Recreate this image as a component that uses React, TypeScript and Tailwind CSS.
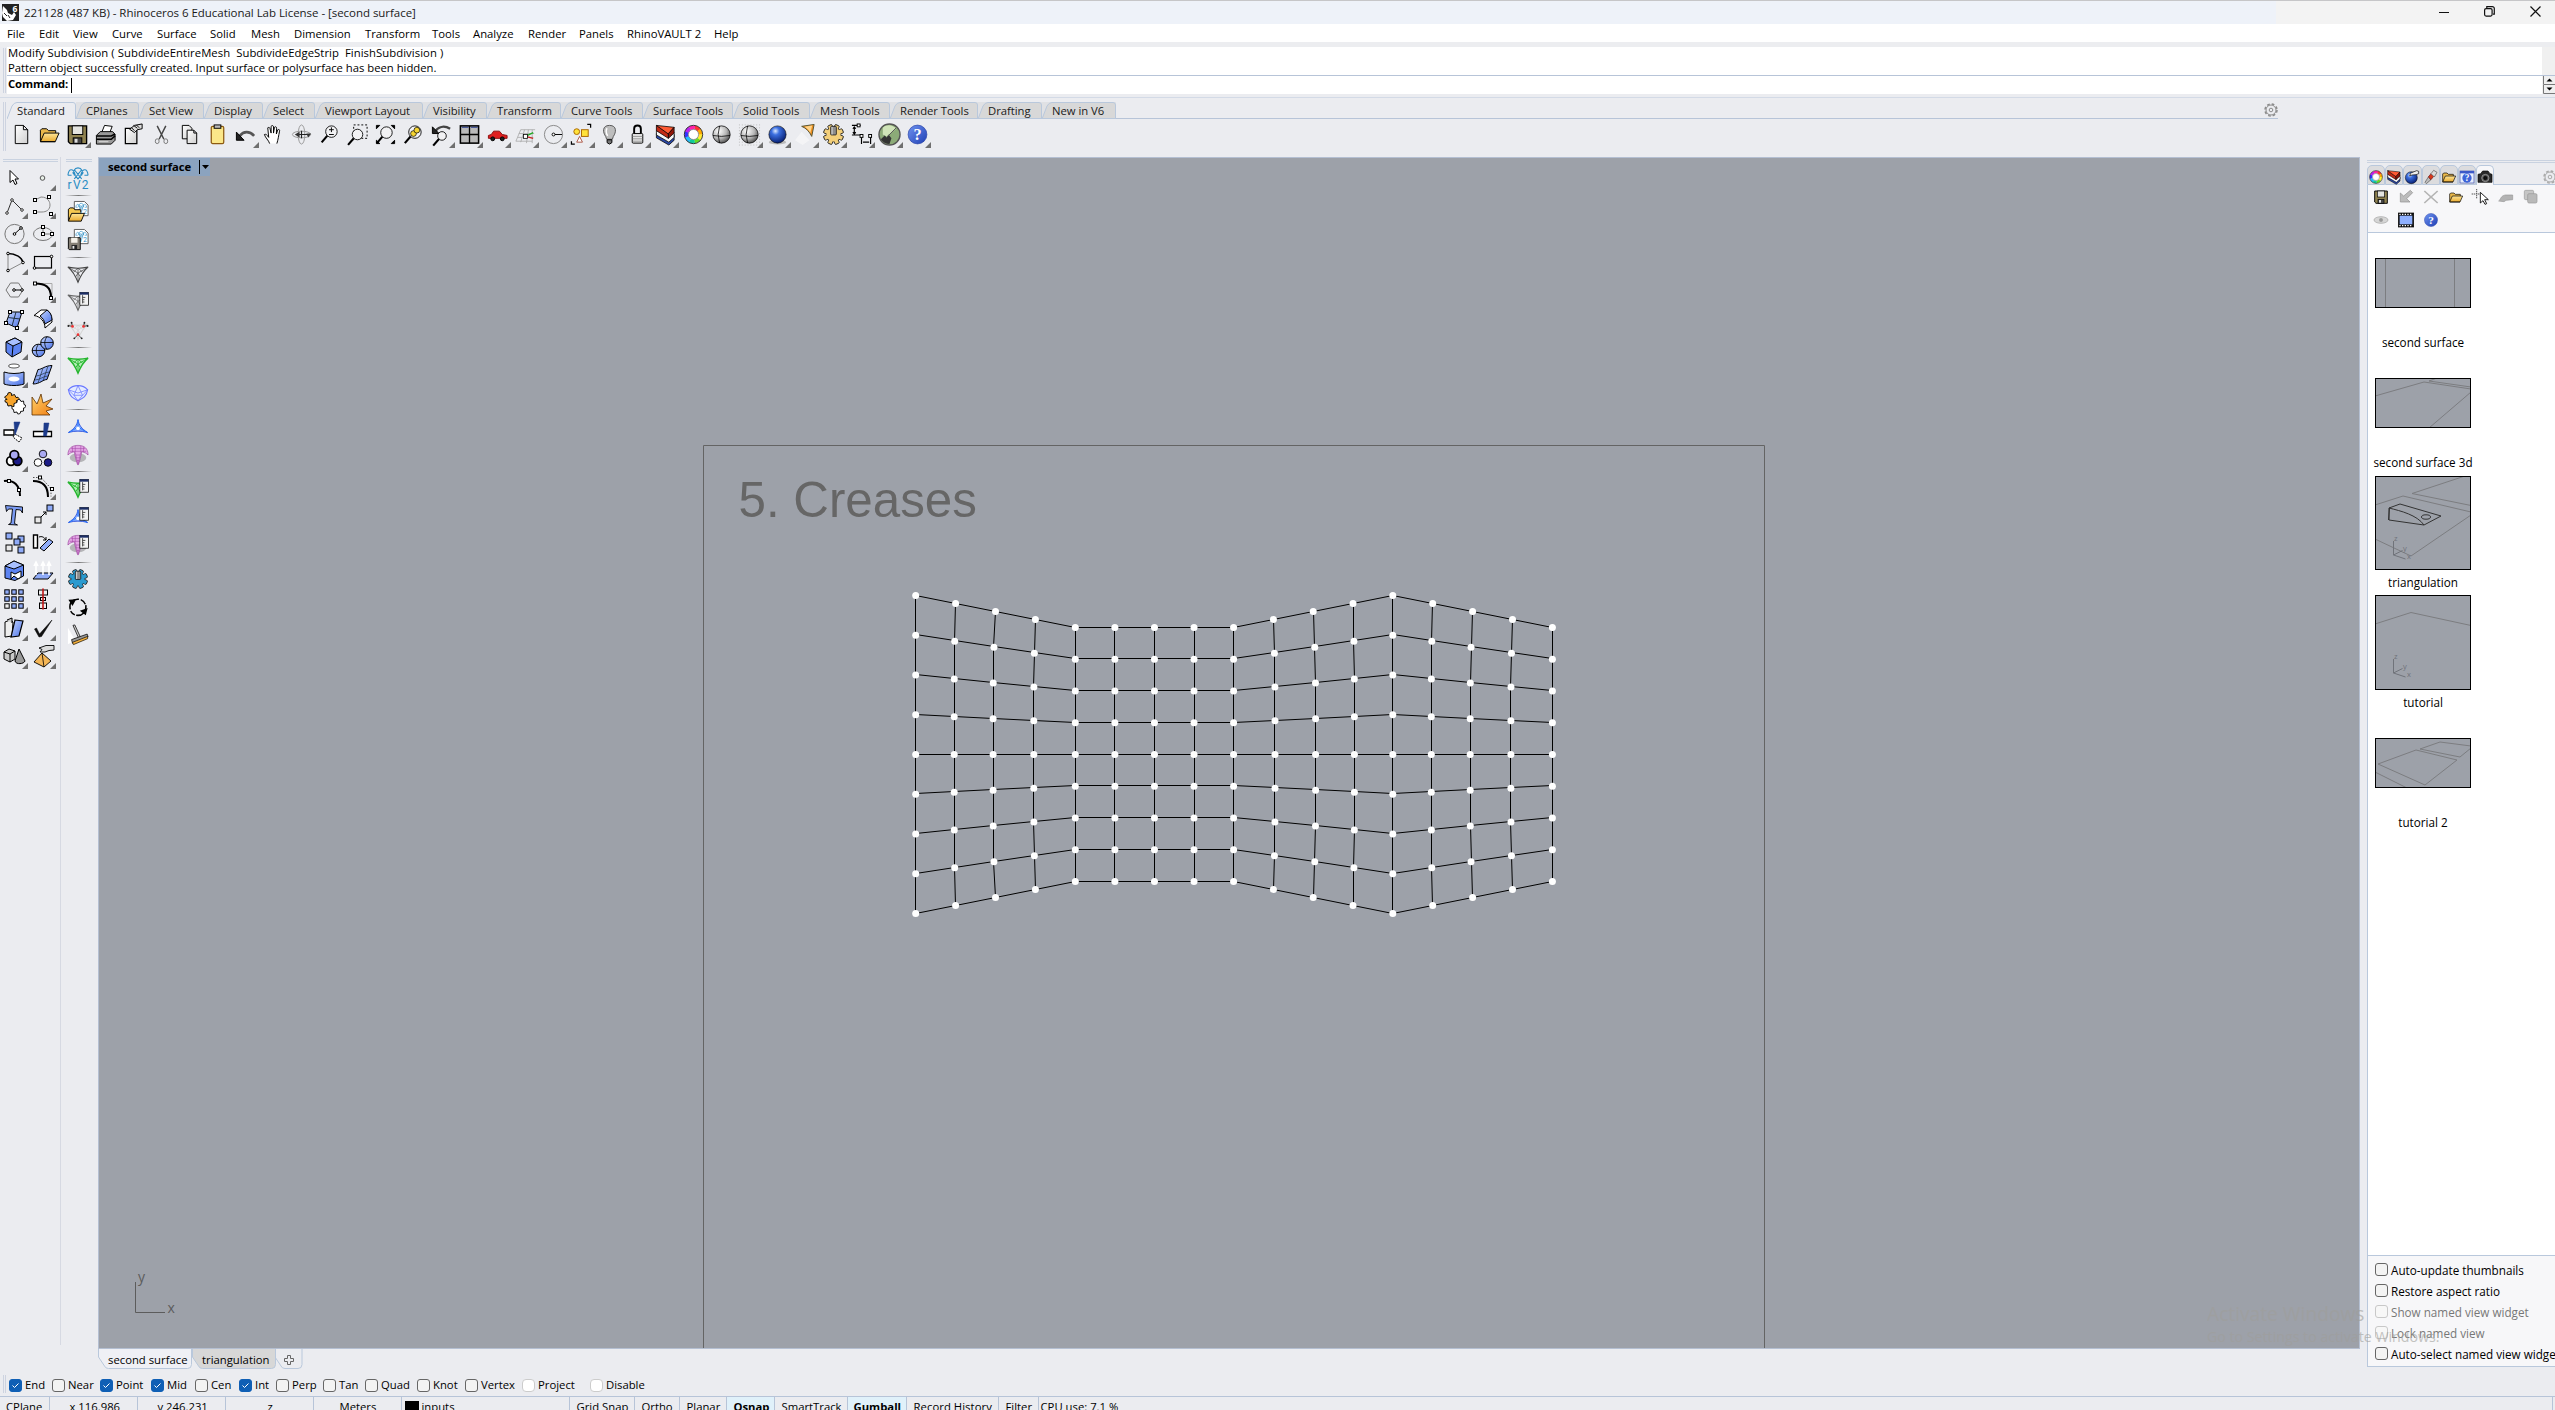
import React from "react";

type Node = React.ReactNode;

/* ---------- shared drawing helpers ---------- */

function Ic({ children, s = 24, cls = "" }: { children: Node; s?: number; cls?: string }) {
  return (
    <svg width={s} height={s} viewBox="0 0 24 24" fill="none" stroke="#000" strokeWidth="1" className={"shrink-0 block overflow-visible " + cls}>
      {children}
    </svg>
  );
}

function Defs() {
  return (
    <svg width="0" height="0" className="absolute">
      <defs>
        <radialGradient id="gGray" cx="0.35" cy="0.3" r="0.8"><stop offset="0" stopColor="#fff" /><stop offset="0.55" stopColor="#b5b5b5" /><stop offset="1" stopColor="#3b3b3b" /></radialGradient>
        <radialGradient id="gBlue" cx="0.38" cy="0.3" r="0.75"><stop offset="0" stopColor="#dbe9ff" /><stop offset="0.3" stopColor="#3b6fe0" /><stop offset="1" stopColor="#041a6b" /></radialGradient>
        <linearGradient id="gHelp" x1="0" y1="0" x2="1" y2="1"><stop offset="0" stopColor="#6f93f0" /><stop offset="1" stopColor="#1f3fb4" /></linearGradient>
        <linearGradient id="gSoft" x1="0" y1="0" x2="1" y2="1"><stop offset="0" stopColor="#c5d6ff" /><stop offset="1" stopColor="#4a72e8" /></linearGradient>
        <linearGradient id="gFold" x1="0" y1="0" x2="0" y2="1"><stop offset="0" stopColor="#ffe79a" /><stop offset="1" stopColor="#e9a92c" /></linearGradient>
        <linearGradient id="gOr" x1="0" y1="0" x2="1" y2="1"><stop offset="0" stopColor="#ffd36b" /><stop offset="1" stopColor="#f07c12" /></linearGradient>
        <linearGradient id="gPage" x1="0" y1="0" x2="1" y2="1"><stop offset="0" stopColor="#fff" /><stop offset="1" stopColor="#cfcfcf" /></linearGradient>
      </defs>
    </svg>
  );
}

const Sq = ({ x, y, f = "#fff", r = 1.5 }: { x: number; y: number; f?: string; r?: number }) => (
  <rect x={x - r} y={y - r} width={r * 2} height={r * 2} fill={f} />
);
const Pt = ({ x, y }: { x: number; y: number }) => <circle cx={x} cy={y} r="1.3" fill="#fff" />;

const Wheel = () => (
  <g fill="none" strokeWidth="4">
    {["#f33", "#fa0", "#fe3", "#6d2", "#1c9", "#2bf", "#33f", "#b2e", "#f2a"].map((c, i) => (
      <circle key={c} cx="12" cy="12" r="7.5" stroke={c} pathLength="9" strokeDasharray="1.05 7.95" strokeDashoffset={-i + 2} />
    ))}
    <circle cx="12" cy="12" r="9.6" stroke="#222" strokeWidth="0.9" />
    <circle cx="12" cy="12" r="5.3" stroke="#555" strokeWidth="0.6" fill="#fff" />
  </g>
);
const Layers = () => (
  <g strokeWidth="0.8">
    <path d="M2.5 11v4.5l13 7.5 5.5-5v-6z" fill="#2947a8" />
    <path d="M2.500 8v4.500l13 7.500 5.500-5v-5z" fill="#f5f5f5" />
    <path d="M2.500 2.500v5.500l12.500 8V11z" fill="#c32a14" />
    <path d="M2.500 2.500l18.500 2-6 7z" fill="#ff5a33" />
    <path d="M21 4.500v6l-6 5.500v-5z" fill="#8f1508" />
  </g>
);
const Folder = () => (
  <g strokeWidth="1">
    <path d="M2.500 19V7.500l1.500-1.500h5l2 2h7.500v3" fill="#e9b84b" />
    <path d="M2.500 19.500l4-9h15.500l-4 9z" fill="url(#gFold)" />
    <path d="M2.500 19.500h15.500" />
  </g>
);
const Floppy = () => (
  <g>
    <path d="M2.500 3h19v18.500H4.500l-2-2z" fill="#8f8250" strokeWidth="1.400" />
    <rect x="6.500" y="3" width="11" height="9" fill="#e4e4e0" />
    <rect x="7.500" y="15.500" width="9" height="6" fill="#444" />
    <rect x="9" y="16.500" width="3" height="4" fill="#ddd" stroke="none" />
  </g>
);
const teeth = [0, 45, 90, 135, 180, 225, 270, 315];
const Gear = ({ c, o = "#222" }: { c: string; o?: string }) => (
  <g>
    {teeth.map((a) => <rect key={a} x="9.700" y="1.500" width="4.600" height="6" rx="0.800" fill={c} stroke={o} strokeWidth="0.900" transform={`rotate(${a + 22.5} 12 12)`} />)}
    <circle cx="12" cy="12" r="7.600" fill={c} stroke={o} strokeWidth="0.500" />
    {teeth.map((a) => <rect key={a} x="10.200" y="3" width="3.600" height="4" fill={c} stroke="none" transform={`rotate(${a + 22.5} 12 12)`} />)}
    <rect x="9" y="3.500" width="6" height="9" rx="1" fill="#8d8d8d" strokeWidth="0.700" />
    <path d="M10.500 4v8" stroke="#ddd" />
  </g>
);
const Help = () => (
  <g>
    <circle cx="12" cy="12" r="9.800" fill="url(#gHelp)" stroke="#2a44a8" strokeWidth="0.700" />
    <text x="12" y="18" textAnchor="middle" fontSize="17" fontWeight="700" fill="#fff" stroke="none" fontFamily="Liberation Serif, serif">?</text>
  </g>
);
const Lens = ({ x = 14, y = 9, r = 6 }) => (
  <g>
    <path d={`M${x - r * 0.7} ${y + r * 0.7}L${x - r * 0.7 - 6} ${y + r * 0.7 + 7}`} strokeWidth="2.200" />
    <circle cx={x} cy={y} r={r} fill="#f2f2f4" strokeWidth="0.900" />
  </g>
);
const Hand = () => <path d="M9 6.500L19 2.500l3 1v3.500l-4 1.500-6 .5-3.500 1.500 1-2.500z" fill="#eee" strokeWidth="1" />;
const Globe = ({ x = 12, y = 12, r = 9, g = "url(#gGray)" }) => (
  <g strokeWidth="0.800">
    <circle cx={x} cy={y} r={r} fill={g} />
    <path d={`M${x - 2} ${y - r}q-3 ${r} 0 ${r * 2}`} />
    <path d={`M${x - r} ${y + 1}q${r} 2 ${r * 2} 0`} />
  </g>
);

/* ---------- main toolbar ---------- */

const toolbar: [Node, boolean][] = [
  [<path d="M5.500 2.500h8.500l4.500 4.500v14.500h-13zM14 2.500V7h4.500" fill="url(#gPage)" />, false],
  [<Folder />, false],
  [<Floppy />, true],
  [<g><path d="M8 10l3-7.500 8 1-3 7.500" fill="#fff" /><path d="M2.500 13l4-4h13l2.500 3v6l-4 4H2.500z" fill="#999" /><path d="M2.500 13.500h15.500l4-2M2.500 17h15.500l4-3.500" strokeWidth="1.600" /><path d="M5 19.500h10" stroke="#ddd" /></g>, false],
  [<g><path d="M3.500 5.500h12v16h-12z" fill="url(#gPage)" strokeWidth="1.300" /><path d="M8 6.500l5-4 8-1.500v5l-5 1-3 3z" fill="#ddd" /><path d="M12 2.500l4 3M15 2l3 3M10 5l3 3" /></g>, false],
  [<g><path d="M7.500 3l7 14M16.500 3l-7 14" stroke="#444" strokeWidth="1.500" /><ellipse cx="7.500" cy="19" rx="2" ry="2.500" stroke="#777" /><ellipse cx="16.500" cy="19" rx="2" ry="2.500" stroke="#777" /></g>, false],
  [<g fill="url(#gPage)"><path d="M4.500 2.500h7l3 3v11h-10z" /><path d="M9.500 7.500h7l3 3v11h-10zM16.500 7.500v3h3" /></g>, false],
  [<g><rect x="5.500" y="3.500" width="13" height="18" rx="1.500" fill="#fbe789" stroke="#8d5a10" strokeWidth="1.300" /><rect x="8.500" y="2" width="7" height="3.500" fill="#bbb" /></g>, false],
  [<g><path d="M6 13.500c4-5 10-5.500 15 0" strokeWidth="2.800" stroke="#555" /><path d="M2.500 9.500v8.500h8z" fill="#222" /></g>, true],
  [<path d="M8 21.500c-1-3.500-4.500-6-5.500-9.500 1.500-.8 3 .6 4.500 3L6 5c1.500-1 2.300 0 2.500 1.500l1 4V3.500c1-1.300 2.300-1 2.500.5v6.500l1-6c1-1 2.300-.6 2.200 1l-.2 6 1.500-4.500c1.400-.6 2.200.3 1.800 1.500-1 5-1.500 9-2.800 13" fill="#fff" />, false],
  [<g stroke="#999"><ellipse cx="12" cy="12" rx="9.500" ry="3.500" /><ellipse cx="12" cy="12" rx="3.500" ry="10" /><path d="M9 12h12M12 8v8" stroke="#222" strokeWidth="1.200" /><path d="M5 12l5-3v6zM19 15l3-4-5 0z" fill="#333" stroke="none" /></g>, false],
  [<g><Lens /><path d="M14 4.500v5M11.500 7h5M11.500 12h5" strokeWidth="1" /></g>, false],
  [<g><rect x="8" y="2" width="14" height="14" strokeDasharray="2 2" /><Lens x={12} y={12} r={5.5} /></g>, false],
  [<g><Lens x={13} y={10} r={6} /><path d="M2.500 6V2.500H6L2.500 6zM18 2.500h3.500V6L18 2.500zM2.500 18v3.500H6L2.500 18zM18 21.500h3.500V18L18 21.500z" fill="#000" /></g>, false],
  [<g><Lens x={13.5} y={9.5} r={6.5} /><circle cx="12" cy="11" r="3" fill="#f6d532" strokeWidth="0.700" /><circle cx="15.500" cy="7.500" r="3" fill="#f6d532" strokeWidth="0.700" /></g>, false],
  [<g><path d="M6 8c4-5 10-5 15-2" stroke="#444" strokeWidth="2.500" /><path d="M2.500 4v7h7z" fill="#222" /><Lens x={12.5} y={13.5} r={4.5} /></g>, true],
  [<g><rect x="2.500" y="3" width="19" height="18" fill="#b9b9b9" strokeWidth="1.600" /><path d="M12 3v18M2.500 12h19" strokeWidth="1.400" /><path d="M4 4.500h7M13.500 4.500h7" stroke="#2b3f8f" /></g>, true],
  [<g><path d="M2.500 13l3-1 2.500-3.500h6l3 3.500 5 1v3H2.500z" fill="#e02020" stroke="#8a0e0e" /><circle cx="7" cy="16.500" r="2" fill="#222" /><circle cx="17" cy="16.500" r="2" fill="#222" /></g>, true],
  [<g stroke="#a5a5a5" strokeWidth="0.800"><path d="M7 7L2 19M11 7L7 20M15 7l-2 14M19 7v14M7 7h15M5 11h16M4 15h16M2 19h17" /><path d="M12 14l8-4" stroke="#2a2" strokeWidth="1.500" /><path d="M12 14l8 2" stroke="#c22" strokeWidth="1.500" /><rect x="10" y="12" width="4" height="4" fill="#fff" stroke="#000" /></g>, true],
  [<g><circle cx="12" cy="12" r="9.500" stroke="#888" /><path d="M12 12h9" /><circle cx="12" cy="12" r="1.500" fill="#fff" /></g>, true],
  [<g><path d="M18 1.500h3.500V5M1.500 19v3H5" strokeWidth="1.300" /><circle cx="7" cy="9" r="3" fill="#ffe23a" stroke="#a60" /><rect x="12" y="7" width="7" height="7" fill="#ffe23a" stroke="#a60" /><path d="M10 14l3 6H7z" fill="#fff" stroke="#a54" /></g>, true],
  [<g><path d="M12 2.500c8 0 7 7.500 4 11.500l-1 3h-6l-1-3C5 10 4 2.500 12 2.500z" fill="#bdbdbd" stroke="#555" /><path d="M9.500 5.500c-1.500 2-1 5 .5 8" stroke="#fff" strokeWidth="1.500" /><path d="M9.500 17.500h5v3l-2.500 1.500-2.500-1.500z" fill="#777" /></g>, true],
  [<g><path d="M8.500 11V6c0-4.500 7-4.500 7 0v5" strokeWidth="2" /><rect x="6.500" y="11" width="11" height="10" rx="1" fill="#e5e5e5" /><path d="M7 14h10M7 16.500h10M7 19h10" stroke="#999" /></g>, true],
  [<Layers />, true],
  [<Wheel />, true],
  [<Globe />, false],
  [<g><path d="M1 2h22M1 5h22M1 8h22M1 11h22M1 14h22M1 17h22M1 20h22M1 23h22" stroke="#bbb" strokeDasharray="1 2" /><Globe /></g>, true],
  [<g><ellipse cx="12" cy="20" rx="9" ry="2.500" fill="#bbb" stroke="none" /><circle cx="12" cy="12" r="9" fill="url(#gBlue)" strokeWidth="0.600" /></g>, true],
  [<g><path d="M1 18L8 9l8 9-7 5z" fill="#fafafa" stroke="none" opacity="0.600" /><path d="M8 3.500l13-2-2.500 12.500C16 9 13 5.500 8 3.500z" fill="#ee8d1f" stroke="#553" /><path d="M11 4l8-1.500-2 8c-1.500-3-3.500-5-6-6.500z" fill="#ffd58a" stroke="none" /></g>, true],
  [<Gear c="#f3cf7a" />, true],
  [<g><path d="M2 2.500h9M2 12.500h9M4.500 4v7M3 6l1.500-2L6 6M3 9.500l1.500 2 1.500-2M12 14v8M21.500 14v8M13.500 20h6.500" strokeWidth="1.200" /><Sq x={9} y={2.5} /><Sq x={12} y={13.5} /><Sq x={21} y={13.5} /></g>, true],
  [<g><circle cx="12" cy="12" r="11" fill="#8cab78" stroke="#555" strokeWidth="1.400" /><path d="M5 5c4-4 11-3 14 1L9 14l-4-2z" fill="#cfe3b8" stroke="none" /><path d="M3 17l4-4 2 2 2-3 3 4-2 6c-4 0-7-2-9-5z" fill="#333" stroke="none" /><path d="M9 15L19 5" stroke="#555" /></g>, true],
  [<Help />, true],
];

/* ---------- side palette, two columns ---------- */

const blue = "#8fabf8";
const palette: [Node, boolean][] = [
  [<path d="M8 4.500v12l3-2.500 2 4.500 2-1-2-4.500h3.500z" fill="#fff" />, false],
  [<circle cx="11.500" cy="12" r="2.300" fill="#e8f0e8" stroke="#555" />, true],
  [<g stroke="#333"><path d="M5 19L10 6l10 10" /><Pt x={5} y={19} /><Pt x={10} y={6} /><Pt x={20} y={16} /></g>, true],
  [<g><path d="M4 6l6-3c7 0 9 5 9 8 0 5-4 7-8 7H5" stroke="#888" /><Sq x={4} y={6} /><Sq x={18} y={3} /><Sq x={4} y={18} /><Sq x={20} y={20} /></g>, true],
  [<g><circle cx="12.500" cy="12" r="9.600" stroke="#777" /><path d="M12.500 12l6.500-6" /><Pt x={12.5} y={12} /><Pt x={19} y={6} /></g>, true],
  [<g><ellipse cx="12" cy="12" rx="9.500" ry="6.500" stroke="#777" /><path d="M12 12V5M12 12h9" stroke="#777" /><Sq x={12} y={5} /><Sq x={12} y={12} /><Sq x={21} y={12} /></g>, true],
  [<g><path d="M6 3.500v17l15-8" stroke="#888" /><path d="M6 3.500c8 0 14 4 15 9" strokeWidth="1.300" /><Pt x={6} y={3.5} /><Pt x={6} y={20.5} /><Pt x={21} y={12.5} /></g>, true],
  [<g><rect x="3.500" y="6.500" width="17" height="11.500" strokeWidth="1.200" /><Pt x={3.5} y={18} /><Pt x={20.5} y={6.5} /></g>, true],
  [<g><path d="M4 12l4.500-7h8l4.500 7-4.500 7h-8z" stroke="#777" /><path d="M12 12h8" /><Pt x={12} y={12} /><Pt x={20} y={12} /></g>, true],
  [<g><path d="M4 5.500h17v15" stroke="#aaa" /><path d="M4 5.500c10 0 16 3 16 14" strokeWidth="2" /><Sq x={4} y={5.5} /><Sq x={20} y={20} /></g>, true],
  [<g><path d="M8 5h12l-5 16L4 16z" fill="url(#gSoft)" /><path d="M14 5l-4 14M6 10.500l12 1.500" stroke="#234" /><Sq x={8} y={5} /><Sq x={20} y={5} /><Sq x={4} y={16} /><Sq x={15} y={21} /></g>, true],
  [<g><path d="M3 8.500L10 3h6c4 3 5 8 5 12l-7 6c0-6-4-11.500-11-12.500z" fill="#fff" /><path d="M9 9l7-6c3 2 5 5 5 10l-7 4c-.5-3-2-6-5-8z" fill="url(#gSoft)" /></g>, true],
  [<g><path d="M4 7l9-4 7 4-1 10-9 5-6-5z" fill="#5d84f2" /><path d="M4 7l9-4 7 4-9 4z" fill="#a9c0ff" /><path d="M11 11l-1 11" /></g>, true],
  [<g><circle cx="7.500" cy="15.500" r="6.300" fill="url(#gSoft)" /><circle cx="16" cy="8" r="6.300" fill="url(#gSoft)" /><path d="M1 15.500h13M7.500 9.500c-3 3-3 9 0 12M10 7.500h12M16 2c-3 3-3 9 0 12" strokeWidth="0.800" /></g>, true],
  [<g><ellipse cx="12" cy="3" rx="5.500" ry="2" fill="#fff" stroke="#555" /><path d="M2 9c6 2 14 2 20 0v12c-6 2-14 2-20 0z" fill="url(#gSoft)" /><ellipse cx="12" cy="16" rx="5.500" ry="2.500" fill="#fff" stroke="none" /></g>, true],
  [<g><path d="M7 6.500c4 0 7-4 14-4l-5 14c-4 0-7 4.500-14 4.500z" fill="url(#gSoft)" /><path d="M12 5L7 20M17 3l-5 15M5 13c5 0 8-4 14-4M4 17c5 0 8-4 13-4" stroke="#234" strokeWidth="0.700" /></g>, true],
  [<g strokeWidth="0.900"><path d="M2.500 6l3-2q0-3 2.500-2.500t1.500 3l3-1 1.500 3q2.500-1 3 1t-2.500 2l1 3-3 1q1 2.500-1 3t-2-2l-3.500.5-1-3.500q-2.500 0-2-2t2-1z" fill="#f6a42c" /><path d="M12 12.500l3-1q-.5-2.500 1.500-3t2.500 2l2.500-.5.500 3.500q2 0 1.500 2t-2 1.500l0 3-3 .5q.5 2-1.500 2.500t-2-2l-3 .5-.5-3q-2 0-1.500-2t2-1z" fill="#fff" /></g>, false],
  [<path d="M1 24V6l5 7L10 3l2 9 9-4-6 7 7 3-7 2 4 4z" fill="url(#gOr)" stroke="#5d3000" strokeWidth="0.800" />, false],
  [<g><path d="M2 11h10v5H2z" fill="#fff" strokeWidth="1.300" /><path d="M13 15l7 4-3 4-6-5z" fill="#fff" strokeDasharray="2 1" /><path d="M12 3h6l-5 13z" fill="#1d3b8b" stroke="#1d3b8b" strokeWidth="0.500" /></g>, false],
  [<g><path d="M2.500 12.500h18v5h-18z" fill="#fff" strokeWidth="1.300" /><path d="M13 4h5l-2.500 13h-3z" fill="#1d3b8b" stroke="#1d3b8b" strokeWidth="0.500" /></g>, false],
  [<g strokeWidth="1.800"><circle cx="9" cy="14" r="4.300" fill="#fff" /><circle cx="15.500" cy="14" r="4.300" fill="#1c1c86" /><circle cx="12.300" cy="8" r="4.300" fill="#a9a9f2" /></g>, true],
  [<g strokeWidth="0.900"><circle cx="12" cy="7" r="3.800" fill="#a9a9f2" /><circle cx="7" cy="15.500" r="3.800" fill="#fff" /><circle cx="17" cy="15.500" r="3.800" fill="#1c1c86" /></g>, false],
  [<g><path d="M2 6c10-2 16 5 16 15" strokeWidth="2" /><Sq x={7} y={6} /><Sq x={17} y={15} /></g>, false],
  [<g><path d="M2 2.500h8l10 11v8" stroke="#555" strokeDasharray="1.500 1.500" /><path d="M2 6c10 0 15 5 15 16" strokeWidth="2" /><Sq x={9} y={2.5} /><Sq x={21} y={14} /></g>, true],
  [<path d="M3.500 2.500l17 1.500v6l-2-3-4.500-.5-1.500 14 3 1.500-9-.5 2.500-1.500 1.500-14-4 0-2 2.500z" fill="#7a9af2" strokeWidth="0.900" />, false],
  [<g><Sq x={19} y={5} f={blue} r={3} /><Sq x={7} y={17} f="#e8e8e8" r={3} /><path d="M10 14l5-5M15 12V9h-3" /></g>, true],
  [<g><Sq x={7} y={5} f={blue} r={3} /><Sq x={19} y={8} f={blue} r={3} /><Sq x={15} y={11} f={blue} r={3} /><Sq x={7} y={17} f="#e8e8e8" r={3} /><Sq x={19} y={19} f={blue} r={3} /></g>, false],
  [<g><path d="M2.500 4h4v13h-4z" fill="#fff" strokeWidth="1.400" /><path d="M9 17l9-9 4 3-9 9z" fill={blue} /><path d="M8 6c3-1 5 0 7 3M15 6v3h-3" /></g>, false],
  [<g><path d="M3 7l9-5 9.500 4v11L13 21.500 3 19z" fill="#5d84f2" /><path d="M3 7l9-5 9.500 4L12 10z" fill="#a9c0ff" /><path d="M9 13l4 2 6-3v6l-3 2-4-3-3 3z" fill="#fff" /></g>, true],
  [<g><path d="M2 20l5-6h15l-5 6z" fill={blue} /><path d="M5 16V5M12 16V5M18 16V5M3 7l2-4 2 4M10 7l2-4 2 4M16 7l2-4 2 4" stroke="#fff" strokeWidth="1.600" /></g>, true],
  [<g>{[5, 12, 19].map((y) => [5, 12, 19].map((x) => <Sq key={x + "-" + y} x={x} y={y} f={x === 5 && y === 19 ? "#eee" : blue} r={2.2} />))}</g>, true],
  [<g><rect x="7.500" y="3" width="9" height="5" fill="#eee" /><rect x="9.500" y="10.500" width="5" height="3" fill="#eee" /><rect x="8.500" y="16" width="7" height="5.500" fill="#eee" /><path d="M12 1.500v21" stroke="#c01616" strokeWidth="1.600" /></g>, true],
  [<g><path d="M3 6l5-2 3 2-1 14-7 1z" fill="#eee" /><path d="M5 4l5-2v5" fill="#ccc" /><path d="M13 4l8 1-4 15-8 1z" fill="url(#gSoft)" strokeWidth="1.200" /></g>, true],
  [<path d="M3.500 13l2-1 3 6L21 4 10.500 20.500l-2.500.5z" fill="#111" strokeWidth="0.500" />, true],
  [<g><path d="M2 8l5-3 6 2v8l-5 3-6-3z" fill="#c9c9c9" /><path d="M2 8l6 2v8M8 10l5-3" /><path d="M17 5l6 12c-1 3-9 4-10 0z" fill="#999" /></g>, true],
  [<g><path d="M11 9l9 8-7 6-10-5z" fill="#f4b656" strokeWidth="0.900" /><path d="M11 9l2 14" strokeWidth="0.800" /><path d="M8 4l7-2.500h8V6l-5 .5-4 1.500H9l2-2.500z" fill="#ddd" strokeWidth="0.900" /></g>, true],
];

/* ---------- form finding plug-in column ---------- */

const Rv = ({ x = 0, y = 0, k = 1 }) => (
  <g transform={`translate(${x} ${y}) scale(${k})`} stroke="#2a8cc4">
    <path d="M1 9c1-8 6-8 8 0M8 9c-2-4 0-8 4-8s6 4 4 8M15 9c2-8 7-8 8 0M8 3l8 10M16 3L8 13M1 9h4M19 9h4M6 6l6 7 6-7" strokeWidth="1.200" />
    <text x="0.500" y="23.500" fontSize="13" fill="#2a8cc4" stroke="none" fontFamily="Roboto, sans-serif" textLength="23">rV2</text>
  </g>
);
const Tri = ({ c = "#444", w = 0.8 }) => (
  <g stroke={c} strokeWidth={w}>
    <path d="M1 4.500c7 1.500 15 1.500 22 0-5 4-8 9-11 16.500C9 13.500 6 8.500 1 4.500z" strokeWidth={w * 1.5} />
    <path d="M1 4.500L12 11l11-6.500M12 11v9M7 10l5-4.500 5 4.500M12 5.500V11M9.500 15l2.500-4 2.500 4" />
  </g>
);
const Star = () => (
  <g stroke="#3355dd"><path d="M12 4c1 6 4 10 10.500 14-7-2-14-2-21 0C8 14 11 10 12 4z" fill="#7fa8ff" /><path d="M12 4v8l10 6M12 12L2 18" stroke="#2277ff" /><circle cx="12" cy="13.500" r="2" fill="#fff" stroke="none" /></g>
);
const Vault = () => (
  <g stroke="#a548a8" strokeWidth="0.600">
    <ellipse cx="12" cy="15" rx="9" ry="5" fill="#b5b5b8" stroke="none" />
    <path d="M1 12C1 4 6 1.500 12 1.500S23 4 23 12c-2-2-4-3-7-3.500C15 14 14 18 12.500 22.500h-1C10 18 9 14 8 8.500 5 9 3 10 1 12z" fill="#e3a6e4" stroke="#8d2f90" />
    <path d="M9 2v7l3 13 3-13V2M4 5h16M3 8h18M9.500 12h5M10 15h4M11 18h2M6 3v6M18 3v6" />
  </g>
);
const Panel = () => (
  <g><rect x="14" y="1.500" width="9.500" height="14" fill="#f3f3f3" strokeWidth="0.800" /><rect x="14" y="1.500" width="9.500" height="2.500" fill="#1b2d66" stroke="none" /><path d="M17 4.500v9M17 7h3M17 9.500h2M17 12h2" stroke="#444" /></g>
);
const PageRv = () => (
  <g><path d="M8 .5h11l4 4v11.500H8z" fill="#fff" stroke="#555" /><Rv x={9} y={2} k={0.54} /></g>
);
const GreenTri = () => (
  <g><path d="M2 5c7 1 13 1 20 0l-10 15z" fill="#b5efb8" stroke="none" /><Tri c="#25b52e" w={1} /></g>
);

const plugin: (Node | null)[] = [
  <Rv />,
  null,
  <g><PageRv /><path d="M1.500 21.500V9l2-1.500h3.500l1.500 2h6.500v3" fill="#f5c851" /><path d="M1.500 22l3.500-8.500h14l-3.500 8.500z" fill="url(#gFold)" /></g>,
  <g><PageRv /><path d="M1.500 9.500h13v13h-12l-1-1z" fill="#857f75" /><rect x="4.500" y="9.500" width="7" height="5.500" fill="#f4f0e8" stroke="none" /><rect x="5" y="17.500" width="6" height="5" fill="#222" stroke="none" /><rect x="6" y="18.500" width="2" height="3" fill="#eee" stroke="none" /></g>,
  null,
  <Tri />,
  <g><Tri c="#666" /><Panel /></g>,
  <g><Tri c="#d5d5d5" /><path d="M6 7L1 6M6 7L5 3M18 7l5-1M18 7l1-4M12 16l-4 4M12 16l4 4" strokeWidth="1" stroke="#444" /><g fill="#e33" stroke="none"><circle cx="6" cy="7" r="1.500" /><circle cx="18" cy="7" r="1.500" /><circle cx="12" cy="16" r="1.500" /></g><g fill="#222" stroke="none"><circle cx="1.500" cy="6.500" r="1" /><circle cx="22.500" cy="6.500" r="1" /><circle cx="8" cy="20" r="1" /><circle cx="16" cy="20" r="1" /><circle cx="5" cy="3" r="1" /><circle cx="19" cy="3" r="1" /></g></g>,
  null,
  <GreenTri />,
  <g stroke="#6a78ff" strokeWidth="0.800"><path d="M1.500 8.500c5-6 16-6 21 0-1 7-5 9-10.500 12C6.500 17.500 2.500 15.500 1.500 8.500z" fill="#e3eaff" strokeWidth="1.200" /><path d="M1.500 8.500l6 6L12 4l5 10.500 5.500-6M7.500 14.500h9.500L12 20.500zM1.500 8.500L12 12l10.500-3.500" /></g>,
  null,
  <Star />,
  <Vault />,
  null,
  <g><GreenTri /><Panel /></g>,
  <g><Star /><Panel /></g>,
  <g><Vault /><Panel /></g>,
  null,
  <Gear c="#2b9bd0" />,
  <g><path d="M3.500 14.500C2 7 6 3 13 3.500M10 21c7 1 11.500-4 10.500-11" strokeWidth="1.700" /><path d="M1.500 4l8.500-.5-4 7.500zM22.500 13l-2 8-6.500-5z" fill="#000" stroke="none" /><path d="M15 4c2.500 1 4 2.500 5 5M8.500 20.500c-2-.8-3.500-2-4.500-4" strokeWidth="1.500" /></g>,
  <g><path d="M1 4l8 14-8 4z" fill="#fff" stroke="none" /><path d="M6.500 1.500l2-.5 6 13-2 1z" fill="#ccc" strokeWidth="0.800" /><path d="M5 17l17-6 1 3-17 7z" fill="#999" strokeWidth="0.800" /><path d="M6 20l16.500-6.500v2.500L7 22.500z" fill="#f6b23c" strokeWidth="0.700" /></g>,
];

const Corner = ({ cls }: { cls: string }) => (
  <svg width="6" height="6" viewBox="0 0 6 6" className={"absolute " + cls}>
    <path d="M6 0v6H0z" fill="#6f6f6f" />
  </svg>
);

/* ---------- data ---------- */

const menus: [string, string][] = [
  ["File", "w-[32px]"], ["Edit", "w-[34px]"], ["View", "w-[39px]"], ["Curve", "w-[45px]"], ["Surface", "w-[53px]"],
  ["Solid", "w-[41px]"], ["Mesh", "w-[43px]"], ["Dimension", "w-[71px]"], ["Transform", "w-[67px]"], ["Tools", "w-[41px]"],
  ["Analyze", "w-[55px]"], ["Render", "w-[51px]"], ["Panels", "w-[48px]"], ["RhinoVAULT 2", "w-[87px]"], ["Help", "w-[40px]"],
];

const tabs: [string, number][] = [
  ["Standard", 69], ["CPlanes", 63], ["Set View", 65], ["Display", 59], ["Select", 52], ["Viewport Layout", 108],
  ["Visibility", 64], ["Transform", 74], ["Curve Tools", 82], ["Surface Tools", 90], ["Solid Tools", 77],
  ["Mesh Tools", 80], ["Render Tools", 88], ["Drafting", 64], ["New in V6", 74],
];

const osnaps: [string, number, number][] = [
  ["End", 43, 1], ["Near", 48, 0], ["Point", 51, 1], ["Mid", 44, 1], ["Cen", 44, 0], ["Int", 37, 1], ["Perp", 47, 0],
  ["Tan", 42, 0], ["Quad", 52, 0], ["Knot", 48, 0], ["Vertex", 57, 0], ["Project", 68, 2], ["Disable", 60, 2],
];

const status: [string, string][] = [
  ["CPlane", "w-[49.500px] pl-[6px]"], ["x 116.986", "w-[88px] pl-[20px]"], ["y 246.231", "w-[88px] pl-[20px]"],
  ["z", "w-[88px] pl-[42px]"], ["Meters", "w-[88px] pl-[26px]"], ["inputs", "w-[168px] pl-[3px]"],
  ["Grid Snap", "w-[65px] pl-[7px]"], ["Ortho", "w-[45px] pl-[7px]"], ["Planar", "w-[47px] pl-[7px]"],
  ["Osnap", "w-[48px] pl-[7px] font-bold bg-[#e0f1fa]"], ["SmartTrack", "w-[73px] pl-[7px]"],
  ["Gumball", "w-[59px] pl-[6px] font-bold bg-[#e0f1fa]"], ["Record History", "w-[92px] pl-[7px] tracking-[0.050px]"], ["Filter", "w-[40px] pl-[7px]"],
];

/* ---------- mesh geometry ---------- */

const crease = [[915.7, 159], [1075.3, 127], [1233.6, 127], [1392.8, 159], [1552.4, 127]];
const bow = [0, 1.4, 2.4, 1.6];
const damp = [0, 0.65, 0.95, 1, 1, 1, 0.95, 0.65, 0];
const grid: [number, number][][] = Array.from({ length: 17 }, (_, i) => {
  const s = Math.min(3, Math.floor(i / 4));
  const k = i - s * 4;
  const [x0, h0] = crease[s];
  const [x1, h1] = crease[s + 1];
  const dx = s === 1 || k === 4 ? 0 : s === 2 ? bow[(4 - k) % 4] : -bow[k];
  const h = h0 + ((h1 - h0) * k) / 4;
  return damp.map((d, j) => [x0 + ((x1 - x0) * k) / 4 + (s === 2 ? dx : dx) * d, 754.2 + (h * (j - 4)) / 4] as [number, number]);
});
const snap = (n: number) => Math.floor(n) + 0.5;

function Mesh() {
  return (
    <svg width="2260" height="1190" viewBox="99 158 2260 1190" className="absolute inset-0">
      <path d="M703.500 1348V445.500H1764.500V1348" fill="none" stroke="#646464" />
      <text x="738.500" y="516.500" fontSize="49.300" fill="#666" fontFamily="Liberation Sans, Arial, sans-serif">5. Creases</text>
      <g fill="none" stroke="#000">
        {grid.map((c, i) => <polyline key={i} points={c.map(([x, y]) => `${snap(x)},${y.toFixed(1)}`).join(" ")} />)}
        {damp.map((_, j) => <polyline key={j} points={grid.map((c) => `${c[j][0].toFixed(1)},${snap(c[j][1])}`).join(" ")} />)}
      </g>
      <g fill="#fff">
        {grid.map((c) => c.map(([x, y]) => <circle key={x + "/" + y} cx={x} cy={y + 0.2} r="3.500" />))}
      </g>
      <path d="M135.500 1282v30.500H165" fill="none" stroke="#5c5c5c" />
      <g fontSize="14" fill="#5c5c5c" fontFamily="Open Sans, sans-serif">
        <text x="138" y="1282">y</text>
        <text x="167.500" y="1313">x</text>
      </g>
    </svg>
  );
}

/* ---------- panel ---------- */

const line = "#7c7d80";
const axes = (
  <g stroke="#70737a">
    <path d="M18.500 79V65M18.500 79l9-4.500M18.500 79l12 4" />
    <g fontSize="7.500" fill="#70737a" stroke="none" fontFamily="Open Sans, sans-serif"><text x="19" y="65">z</text><text x="28" y="75">y</text><text x="32" y="83">x</text></g>
  </g>
);
const thumbs: [string, number, Node][] = [
  ["second surface", 50, <path d="M10.500 0v50M79.500 0v50" />],
  ["second surface 3d", 50, <path d="M0 18L49 4l47 7M54 3l42 6M54 3l8-3M96 14L54 50" />],
  ["triangulation", 94, <g><path d="M0 29L28 20l68 16M90 0L37 17.500l59 12M0 63l36 17 60-41" /><path d="M14 32l11-4 41 12-17 9-35-5zM14 32c12 3 28 7 35 17M13.500 44l1-12" stroke="#333" /><ellipse cx="51" cy="41" rx="4.500" ry="2.200" stroke="#333" />{axes}</g>],
  ["tutorial", 95, <g><path d="M0 29L36 17.500l60 13" /><g transform="translate(0 -1)">{axes}</g></g>],
  ["tutorial 2", 50, <path d="M3 26l38-14 41 10-32 25zM45 11l20-7 31 4M45 11l40 8 11-9M0 34l32 16" />],
];

const panelTabs: Node[] = [
  <Wheel />, <Layers />,
  <g><circle cx="11" cy="13" r="9" fill="url(#gBlue)" strokeWidth="0.700" /><Hand /></g>,
  <g><path d="M3 20l5-8 4 4-7 6z" fill="#bbb" stroke="#555" /><path d="M8 12l4-5 4 4-4 5z" fill="#d8391c" stroke="#611" /><path d="M12 7l4-5 5 3-4 7z" fill="#ddd" stroke="#555" /></g>,
  <Folder />,
  <g><rect x="1.500" y="3" width="21" height="18" fill="#e8eefc" stroke="#3b4fae" /><rect x="1.500" y="3" width="21" height="3.500" fill="#3b58c8" stroke="none" /><circle cx="12" cy="13.500" r="7" fill="#3d63d8" stroke="none" /><text x="12" y="18.500" textAnchor="middle" fontSize="14" fontWeight="700" fill="#fff" stroke="none" fontFamily="Liberation Serif, serif">?</text></g>,
  <g><path d="M1.500 8l4-1 3-4h8l3 4 3 1v12h-21z" fill="#2a2a2a" /><circle cx="12.500" cy="13.500" r="5.500" fill="#555" stroke="#aaa" /><circle cx="12.500" cy="13.500" r="2.500" fill="#111" /></g>,
];

const panelTools: Node[] = [
  <Floppy />,
  <path d="M18.500 2l3.500 3.500L13 14.500l5 5H3.500V6l5 4.500z" fill="#bcbcbc" stroke="#909090" />,
  <path d="M2 3l20 18M22 3L2 21" stroke="#b4b4b4" strokeWidth="2.500" />,
  <Folder />,
  <g><path d="M5.500 0v14M-2 7.500h7M7 7.500h4" strokeDasharray="2 1" /><path d="M11 5v16l4-3.500 3 5.500 2.500-1-3-6H23z" fill="#fff" strokeWidth="1.300" /></g>,
  <path d="M1 18c3-2 3-8 10-9h11v7l-10 1-3 2z" fill="#b3b3b3" stroke="#999" />,
  <g fill="#c6c6c6" stroke="#999"><rect x="2" y="2" width="14" height="14" rx="2" /><rect x="7" y="7" width="14" height="14" rx="2" fill="#b9b9b9" /></g>,
  <g stroke="#a0a0a0"><ellipse cx="12" cy="12" rx="10.500" ry="5" fill="#d5d5d5" /><circle cx="12" cy="12" r="2.500" fill="#999" /></g>,
  <g><rect x="0.500" y="1.500" width="23" height="21" fill="#111" /><rect x="2.500" y="5.500" width="19" height="13" fill="#8fb0ff" stroke="none" /><path d="M2 3.500h20M2 20.500h20" stroke="#fff" strokeWidth="2" strokeDasharray="2 2" /></g>,
  <Help />,
];

const options: [string, boolean][] = [
  ["Auto-update thumbnails", false], ["Restore aspect ratio", false], ["Show named view widget", true],
  ["Lock named view", true], ["Auto-select named view widgets", false],
];

const GearOutline = ({ c }: { c: string }) => (
  <svg width="14" height="14" viewBox="0 0 14 14" fill="none" stroke={c}>
    <circle cx="7" cy="7" r="6" strokeWidth="1.500" strokeDasharray="2.700 2.012" />
    <circle cx="7" cy="7" r="5" />
    <circle cx="7" cy="7" r="1.800" />
  </svg>
);

export default function App() {
  return (
    <div className="flex h-[1410px] w-[2555px] flex-col overflow-hidden bg-[#ebecf0] font-['Open_Sans','Noto_Sans',sans-serif] text-[11.3px] leading-[16px] text-black whitespace-pre">
      <Defs />

      {/* title bar */}
      <div className="flex h-[24px] shrink-0 items-center border-t border-[#c6c6c8] bg-[#eef2f9]">
        <svg width="17" height="17" viewBox="0 0 17 17" className="ml-[2px]">
          <rect width="17" height="17" fill="#222" />
          <path d="M1 2l4 4 1 3 4 2 2-3 2 3-3 5-6 1-4-4-1-4z" fill="#fff" />
          <path d="M2 9l3 3M6 11l2 3" stroke="#222" />
          <text x="10.500" y="8" fontSize="8.500" fontWeight="700" fill="#fff" fontFamily="Open Sans, sans-serif">6</text>
        </svg>
        <span className="ml-[5px] text-[11.5px] tracking-[-0.04px] text-[#1a1a1a]">221128 (487 KB) - Rhinoceros 6 Educational Lab License - [second surface]</span>
        <div className="ml-auto flex h-full w-[279px] items-center bg-[#f3f3f3] pl-[163px] pb-[2px]">
          <svg width="10" height="11" viewBox="0 0 10 11" stroke="#111"><path d="M0 6.500h10" /></svg>
          <svg width="11" height="11" viewBox="0 0 11 11" fill="none" stroke="#111" strokeWidth="1.200" className="ml-[35px]"><rect x="0.600" y="2.600" width="7.500" height="7.500" rx="1.500" /><path d="M2.800 2V.6h5.500a2 2 0 012 2v5.500H9" /></svg>
          <svg width="11" height="11" viewBox="0 0 11 11" stroke="#111" strokeWidth="1.200" className="ml-[35px]"><path d="M.5.500l10 10M10.500.500l-10 10" /></svg>
        </div>
      </div>

      {/* menu bar */}
      <div className="flex h-[18px] shrink-0 items-center bg-white pt-[2px] pl-[7px]">
        {menus.map(([m, w]) => <span key={m} className={w}>{m}</span>)}
      </div>

      {/* command area */}
      <div className="flex h-[52px] shrink-0 border-t-[5px] border-[#ecedf0]">
        <div className="my-px ml-[3px] w-[3px] shrink-0 border-x border-[#cdd3e0]" />
        <div className="ml-px flex h-[47px] w-[2536px] flex-col bg-white">
          <div className="h-[29px] border-b border-[#b7c4d8]">
            <div className="h-[14px] pl-[1px] leading-[12px] tracking-[0.055px]">Modify Subdivision ( SubdivideEntireMesh  SubdivideEdgeStrip  FinishSubdivision )</div>
            <div className="h-[14px] pl-[1px] leading-[14px] tracking-[-0.02px]">Pattern object successfully created. Input surface or polysurface has been hidden.</div>
          </div>
          <div className="flex h-[18px] items-center pl-[1px]">
            <b className="w-[63px] leading-[14px] pb-[2px] tracking-[-0.1px]">Command:</b>
            <span className="h-[15px] w-px bg-black" />
          </div>
        </div>
        <div className="flex flex-1 flex-col bg-[#f0f0f0]">
          <div className="h-[29px] border-b border-[#b7c4d8]" />
          <div className="ml-[1px] flex h-[18px] flex-col">
            <svg width="12" height="9" viewBox="0 0 12 9"><path d="M.5 0v8.500H12" fill="none" stroke="#777" /><path d="M3.500 5.500L6.500 2.500l3 3z" /></svg>
            <svg width="12" height="9" viewBox="0 0 12 9"><path d="M.5 0v8.500H12" fill="none" stroke="#777" /><path d="M3.500 2.500l3 3 3-3z" /></svg>
          </div>
        </div>
      </div>

      {/* toolbar tabs */}
      <div className="mt-[3px] h-px shrink-0 bg-[#d3dae6]" />
      <div className="flex h-[59px] shrink-0 pt-[4px]">
        <div className="ml-[3px] h-[49px] w-[3px] shrink-0 border-x border-[#cdd3e0]" />
        <div className="ml-[1px] w-[2271px]">
          <div className="flex h-[17px]">
            {tabs.map(([t, w], i) => (
              <div key={t} className="relative h-[17px] shrink-0" style={{ width: w }}>
                <svg width={w} height="17" viewBox={`0 0 ${w} 17`} className="absolute inset-0">
                  {i > 0 && <rect width={w} height="17" fill="#e0e1e4" />}
                  <path d={`M0 17L5 4Q7 .5 10 .5H${w - 3}Q${w - 0.5} .5 ${w - 0.5} 3V17`} fill={i ? "#d8d8d8" : "#ebecf0"} stroke="#b9c8dc" />
                  {i > 0 && <path d={`M0 16.500H${w}`} stroke="#b9c8dc" />}
                </svg>
                <span className="relative block pl-[10px] leading-[17px] tracking-[-0.03px] text-[#1a1a1a]">{t}</span>
              </div>
            ))}
            <div className="flex flex-1 items-center justify-end border-b border-[#b7c4d8]"><GearOutline c="#8b8b8b" /></div>
          </div>
          <div className="flex h-[31px] items-center">
            {toolbar.map(([n, c], i) => (
              <div key={i} className="relative flex h-[28px] w-[28px] shrink-0 items-center justify-center">
                <Ic s={23}>{n}</Ic>
                {c && <Corner cls="right-0 bottom-[1px]" />}
              </div>
            ))}
          </div>
        </div>
      </div>

      {/* work area */}
      <div className="flex h-[1214px] shrink-0">
        <div className="flex w-[61px] shrink-0 flex-col border-r border-[#d6d9e2] mb-[26px]">
          <div className="mt-[2px] ml-[3px] h-[3px] w-[55px] border-y border-[#c9d2e0]" />
          <div className="mt-[2px] grid w-[57px] grid-cols-[28.500px_28.500px]">
            {palette.map(([n, c], i) => (
              <div key={i} className="relative flex h-[28.100px] items-center justify-center">
                <Ic s={24}>{n}</Ic>
                {c && <Corner cls="right-[1px] bottom-[1px]" />}
              </div>
            ))}
          </div>
        </div>
        <div className="flex w-[37px] shrink-0 flex-col">
          <div className="mt-[2px] ml-[5px] h-[3px] w-[26px] border-y border-[#c9d2e0]" />
          <div className="mt-[2px] flex flex-col">
            {plugin.map((n, i) =>
              n === null ? (
                <div key={i} className="mx-[4px] my-[2.500px] h-px w-[27px] bg-linear-to-r from-transparent via-[#777] to-transparent" />
              ) : (
                <div key={i} className="flex h-[28.100px] items-center justify-center pr-[3px]"><Ic s={22}>{n}</Ic></div>
              )
            )}
          </div>
        </div>

        <div className="flex w-[2262px] shrink-0 flex-col">
          <div className="relative h-[1192px] w-[2262px] overflow-hidden border border-[#b4bfd2] bg-[#9da1a9]">
            <Mesh />
            <div className="relative flex h-[18px] w-[111px] items-center bg-[#8ba3bf] pl-[9px] font-bold">
              <span className="w-[91px] tracking-[-0.1px]">second surface</span>
              <span className="h-[14px] w-px bg-black" />
              <svg width="7" height="4" viewBox="0 0 7 4" className="ml-[2px]"><path d="M0 0h7L3.500 4z" /></svg>
            </div>
          </div>
          <div className="flex h-[20px]">
            <div className="relative h-[20px] w-[94px]">
              <svg width="94" height="20" className="absolute inset-0"><path d="M.5 0v8l6 9q1 2.500 4 2.500h79q4 0 4-4V0" fill="#eff0f5" stroke="#b9c8dc" /></svg>
              <span className="relative block pl-[10px] leading-[22px]">second surface</span>
            </div>
            <div className="relative h-[20px] w-[84px]">
              <svg width="84" height="20" className="absolute inset-0"><path d="M.5 0v8l6 9q1 2.500 4 2.500h69q4 0 4-4V0" fill="#d7d7d7" stroke="#b9c8dc" /></svg>
              <span className="relative block pl-[10px] leading-[22px]">triangulation</span>
            </div>
            <svg width="27" height="20" fill="none">
              <path d="M-1 0v8l6 9q1 2.500 4 2.500h13q4 0 4-4V0" stroke="#b9c8dc" />
              <path d="M11.500 6.500h3v3h3v3h-3v3h-3v-3h-3v-3h3z" stroke="#666" />
            </svg>
          </div>
        </div>

        {/* named views panel */}
        <div className="ml-[7px] flex w-[188px] shrink-0 flex-col">
          <div className="mt-[3px] h-[3px] shrink-0 border-y border-[#c9d2e0]" />
          <div className="mt-[2px] flex h-[20px] shrink-0">
            {panelTabs.map((n, i) => (
              <div key={i} className={"flex h-[20px] w-[18.200px] shrink-0 items-center justify-center rounded-t-[5px] border border-[#b9c8dc] pt-[3px] " + (i === 6 ? "border-b-0 bg-[#f7f7f9]" : "bg-[#dcdcde]")}>
                <Ic s={16}>{n}</Ic>
              </div>
            ))}
            <div className="flex flex-1 justify-end overflow-hidden border-b border-[#b9c8dc] pt-[5px]">
              <div className="w-[12px] shrink-0 overflow-visible"><GearOutline c="#a9a9a9" /></div>
            </div>
          </div>
          <div className="flex h-[1182px] flex-col border-b border-l border-[#b9c8dc] bg-[#f7f7f9]">
            <div className="flex h-[48px] shrink-0 flex-wrap content-start border-b border-[#b9c8dc]">
              {panelTools.map((n, i) => (
                <div key={i} className="flex h-[23px] w-[25px] items-center justify-center"><Ic s={16}>{n}</Ic></div>
              ))}
            </div>
            <div className="flex h-[1022px] shrink-0 flex-col bg-white pt-[2px] pl-[7px]">
              {thumbs.map(([t, h, n]) => (
                <div key={t} className="flex h-[120px] w-[96px] flex-col items-center">
                  <div className="flex h-[95px] shrink-0 items-center">
                    <svg width="96" height={h} viewBox={`1 1 94 ${h - 2}`} fill="none" stroke={line} className="border border-black bg-[#9da1a9]">{n}</svg>
                  </div>
                  <span className="mt-[4px] text-[11.7px] leading-[16px]">{t}</span>
                </div>
              ))}
            </div>
            <div className="flex flex-1 flex-col border-t border-[#b9c8dc] pt-[3px] pl-[7px]">
              {options.map(([t, dis]) => (
                <div key={t} className={"flex h-[21px] items-center text-[11.7px] " + (dis ? "text-[#777]" : "")}>
                  <span className={"mr-[3px] h-[13px] w-[13px] shrink-0 rounded-[3px] border " + (dis ? "border-[#c8c8c8] bg-[#f7f7f7]" : "border-[#666] bg-[#f3f3f3]")} />
                  {t}
                </div>
              ))}
            </div>
          </div>
        </div>
      </div>

      {/* object snaps */}
      <div className="flex h-[25px] shrink-0 items-center">
        <div className="ml-[3px] h-[18px] w-[3px] shrink-0 border-x border-[#cdd3e0]" />
        <div className="ml-[3px] flex pt-[3px]">
          {osnaps.map(([t, w, k]) => (
            <div key={t} className="flex shrink-0 items-center" style={{ width: w }}>
              <span className={"mr-[3px] flex h-[13px] w-[13px] shrink-0 items-center justify-center border " + (k === 1 ? "rounded-[3px] border-[#0f5fb5] bg-[#0f5fb5]" : k === 0 ? "rounded-[3px] border-[#666] bg-[#f3f3f3]" : "rounded-[4px] border-[#ccc] bg-white")}>
                {k === 1 && <svg width="9" height="9" viewBox="0 0 9 9" fill="none" stroke="#fff"><path d="M1.500 4.500l2 2 4-4" /></svg>}
              </span>
              {t}
            </div>
          ))}
        </div>
      </div>

      {/* status bar */}
      <div className="flex h-[14px] shrink-0 overflow-hidden border-t border-[#b7c4d8]">
        {status.map(([t, c]) => (
          <div key={t} className={"flex h-[20px] shrink-0 items-center border-r border-[#b7c4d8] " + c}>
            {t === "inputs" && <span className="mr-[3px] mt-[2px] h-[14px] w-[14px] bg-black" />}
            {t}
          </div>
        ))}
        <div className="flex h-[20px] flex-1 items-center pl-[2px]">CPU use: 7.1 %</div>
        <div className="w-[3px] border-l border-[#b7c4d8]" />
      </div>

      {/* activation watermark */}
      <div className="pointer-events-none absolute top-[1301px] left-[2207px] text-[#9f9f9b] opacity-60">
        <div className="text-[19.2px] leading-[26px]">Activate Windows</div>
        <div className="text-[14.2px] leading-[20px]">Go to Settings to activate Windows.</div>
      </div>
    </div>
  );
}
